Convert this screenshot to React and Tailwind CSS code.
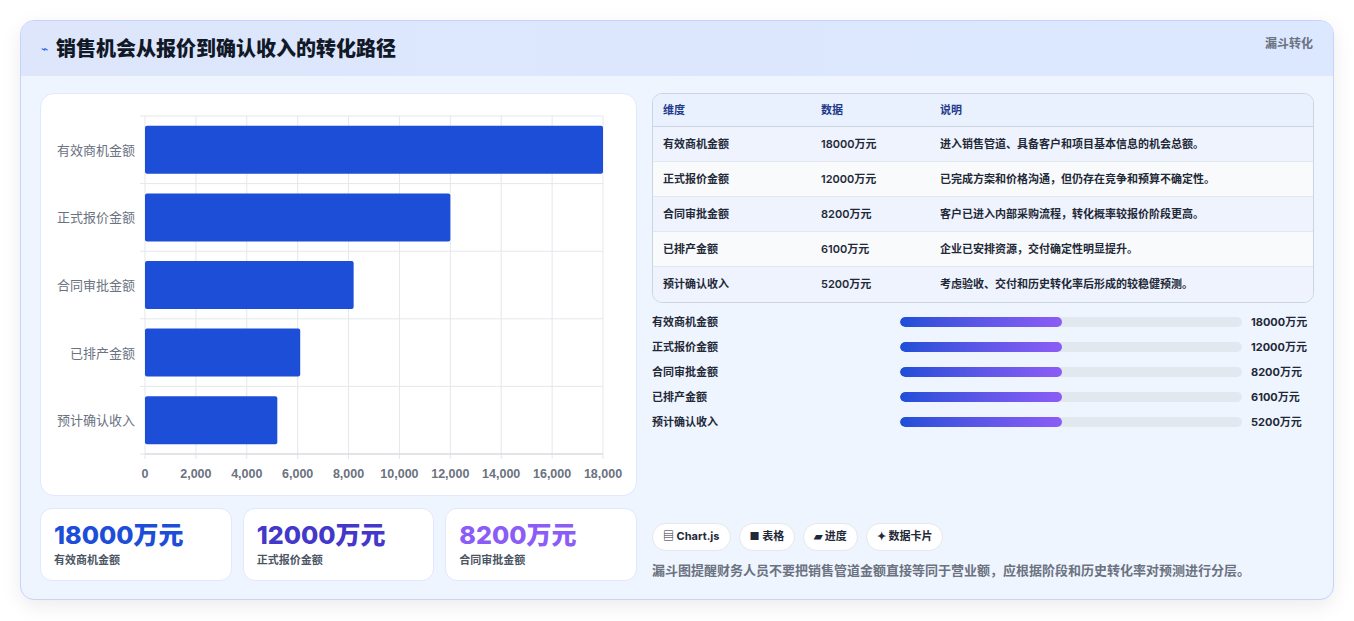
import React from "react";

const rows = [
  ["有效商机金额", 18000, "进入销售管道、具备客户和项目基本信息的机会总额。"],
  ["正式报价金额", 12000, "已完成方案和价格沟通，但仍存在竞争和预算不确定性。"],
  ["合同审批金额", 8200, "客户已进入内部采购流程，转化概率较报价阶段更高。"],
  ["已排产金额", 6100, "企业已安排资源，交付确定性明显提升。"],
  ["预计确认收入", 5200, "考虑验收、交付和历史转化率后形成的较稳健预测。"],
];

function Chart() {
  const x0 = 104, x1 = 562, y0 = 22, y1 = 360;
  const ticks = [0, 2000, 4000, 6000, 8000, 10000, 12000, 14000, 16000, 18000];
  const band = (y1 - y0) / 5;
  return (
    <svg width="597" height="402" className="block">
      {ticks.map((t) => {
        const x = x0 + ((x1 - x0) * t) / 18000;
        return (
          <g key={t}>
            <line x1={x} y1={y0} x2={x} y2={y1 + 5} stroke="#e5e7eb" />
            <text x={x} y={384} textAnchor="middle" fontSize="12.5" fontWeight="600" fill="#6b7280" fontFamily="Liberation Sans, sans-serif">{t.toLocaleString("en-US")}</text>
          </g>
        );
      })}
      {[0, 1, 2, 3, 4, 5].map((i) => (
        <line key={i} x1={x0 - 5} x2={x1} y1={y0 + band * i} y2={y0 + band * i} stroke="#e5e7eb" />
      ))}
      <line x1={x0} x2={x1} y1={y1} y2={y1} stroke="#d1d5db" />
      {rows.map((r, i) => {
        const yc = y0 + band * i + band / 2;
        return (
          <g key={i}>
            <rect x={x0} y={yc - 24} width={((x1 - x0) * r[1]) / 18000} height={48} rx="2" fill="#1d4ed8" />
            <text x={x0 - 10} y={yc + 5} textAnchor="end" fontSize="13" fill="#6b7280" fontFamily="Noto Sans CJK SC, sans-serif">{r[0]}</text>
          </g>
        );
      })}
    </svg>
  );
}

export default function App() {
  return (
    <div className="w-[1354px] h-[621px] bg-white pt-[20px] px-[20px]" style={{ fontFamily: "Inter, 'Noto Sans CJK SC', sans-serif" }}>
      <div className="w-[1314px] h-[580px] rounded-[14px] border border-[#c7d2fe] bg-[#eff5ff] overflow-hidden shadow-[0_6px_20px_rgba(0,0,0,0.08)]">
        <div className="h-[55px] bg-gradient-to-r from-[#dde6fb] to-[#dbe8ff] flex items-center justify-between px-[20px]">
          <div className="flex items-center gap-[8px]">
            <span className="text-[#2563eb] text-[12px]">⌁</span>
            <span className="text-[20px] font-black text-[#111827]">销售机会从报价到确认收入的转化路径</span>
          </div>
          <span className="self-start mt-[14px] text-[12px] font-bold text-[#6b7280]">漏斗转化</span>
        </div>
        <div className="flex px-[19px] pt-[17px] gap-[15px]">
          <div className="w-[597px]">
            <div className="h-[403px] bg-white rounded-[14px] border border-[#e0e7ff]">
              <Chart />
            </div>
            <div className="flex gap-[11px] mt-[12px]">
              {[["18000万元", "text-[#1d4ed8]", "有效商机金额"], ["12000万元", "text-[#4338ca]", "正式报价金额"], ["8200万元", "text-[#8b5cf6]", "合同审批金额"]].map((k) => (
                <div key={k[2]} className="w-[192px] h-[73px] bg-white rounded-[12px] border border-[#e0e7ff] px-[13px] pt-[10px]">
                  <div className={"text-[25px] font-extrabold leading-[32px] " + k[1]}>{k[0]}</div>
                  <div className="text-[11px] font-semibold text-[#4b5563] mt-[1px]">{k[2]}</div>
                </div>
              ))}
            </div>
          </div>
          <div className="w-[662px] flex flex-col">
            <div className="rounded-[10px] border border-[#cbd5e1] overflow-hidden text-[11px] font-semibold text-[#1f2937]">
              <div className="h-[33px] flex items-center bg-[#eaf1fe] text-[#1e3a8a] border-b border-[#cbd5e1]">
                <div className="w-[168px] pl-[10px]">维度</div>
                <div className="w-[119px]">数据</div>
                <div>说明</div>
              </div>
              {rows.map((r, i) => (
                <div key={i} className={"h-[35px] flex items-center border-b last:border-b-0 border-[#e2e8f0] " + (i % 2 ? "bg-[#f8fafc]" : "bg-[#eef3fe]")}>
                  <div className="w-[168px] pl-[10px]">{r[0]}</div>
                  <div className="w-[119px]">{r[1]}万元</div>
                  <div>{r[2]}</div>
                </div>
              ))}
            </div>
            <div className="mt-[10px] flex flex-col gap-[7px]">
              {rows.map((r, i) => (
                <div key={i} className="h-[18px] flex items-center text-[11px] font-bold text-[#1f2937]">
                  <div className="w-[248px]">{r[0]}</div>
                  <div className="w-[342px] h-[10px] rounded-full bg-[#e2e8f0] overflow-hidden">
                    <div className="w-[162px] h-full rounded-full bg-gradient-to-r from-[#1d4ed8] to-[#8b5cf6]" />
                  </div>
                  <div className="ml-[9px]">{r[1]}万元</div>
                </div>
              ))}
            </div>
            <div className="mt-auto flex gap-[8px] text-[11px] font-bold text-[#1f2937]">
              {["▤ Chart.js", "■ 表格", "▰ 进度", "✦ 数据卡片"].map((t) => (
                <span key={t} className="h-[28px] px-[10px] flex items-center rounded-full bg-white border border-[#e5e7eb]">{t}</span>
              ))}
            </div>
            <div className="mt-[10px] mb-[1px] text-[13px] font-semibold text-[#6b7280]">漏斗图提醒财务人员不要把销售管道金额直接等同于营业额，应根据阶段和历史转化率对预测进行分层。</div>
          </div>
        </div>
      </div>
    </div>
  );
}
